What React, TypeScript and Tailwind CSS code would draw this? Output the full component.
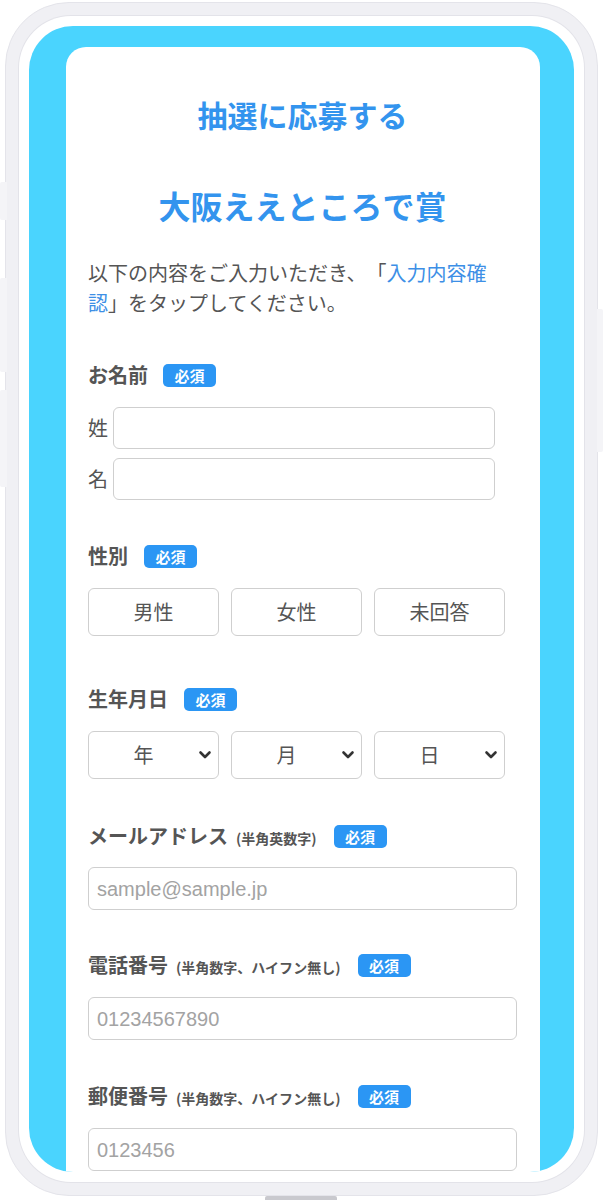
import React from 'react';

const jp = { fontFamily: '"Noto Sans CJK JP", "Noto Sans", sans-serif' };

const Badge: React.FC = () => (
  <span className="inline-flex h-[23px] w-[53px] items-center justify-center rounded-[5px] bg-[#2b96f4] text-[15px] font-bold leading-none text-white">
    必須
  </span>
);

interface LabelProps {
  text: string;
  note?: string;
  gap?: string;
}

const FieldLabel: React.FC<LabelProps> = ({ text, note, gap = 'gap-[15px]' }) => (
  <div className={`flex h-[24px] items-center ${gap}`}>
    <span className="text-[20px] font-bold leading-none text-[#555]">
      {text}
      {note && <span className="ml-[8px] text-[14px]">{note}</span>}
    </span>
    <Badge />
  </div>
);

const TextInput: React.FC<{ placeholder?: string; className?: string }> = ({ placeholder, className = '' }) => (
  <div
    className={`flex h-[43px] items-center rounded-[6px] border border-[#cfcfcf] bg-white pl-[8px] text-[20px] text-[#a3a3a3] ${className}`}
    style={{ fontFamily: '"Liberation Sans", Arial, sans-serif' }}
  >
    {placeholder}
  </div>
);

const Chevron: React.FC = () => (
  <svg width="14" height="10" viewBox="0 0 14 10" className="shrink-0">
    <path d="M2.5 2.5 L7 7 L11.5 2.5" fill="none" stroke="#333" strokeWidth="2.6" strokeLinecap="round" strokeLinejoin="round" />
  </svg>
);

const SelectBox: React.FC<{ label: string }> = ({ label }) => (
  <div className="flex h-[48px] w-[131px] items-center rounded-[6px] border border-[#cfcfcf] bg-white pr-[6px]">
    <span className="flex-1 text-center text-[20px] text-[#555]">{label}</span>
    <Chevron />
  </div>
);

const ChoiceButton: React.FC<{ label: string }> = ({ label }) => (
  <div className="flex h-[48px] w-[131px] items-center justify-center rounded-[6px] border border-[#cfcfcf] bg-white text-[20px] text-[#555]">
    {label}
  </div>
);

export default function App() {
  return (
    <div className="relative h-[1200px] w-[603px] overflow-hidden bg-white [text-spacing-trim:space-all]" style={jp}>
      {/* side keys */}
      <div className="absolute left-0 top-[182px] h-[38px] w-[7px] rounded-l-[2px] bg-[#f4f4f7]" />
      <div className="absolute left-0 top-[278px] h-[94px] w-[7px] rounded-l-[2px] bg-[#f4f4f7]" />
      <div className="absolute left-0 top-[390px] h-[97px] w-[7px] rounded-l-[2px] bg-[#f4f4f7]" />
      <div className="absolute right-0 top-[309px] h-[143px] w-[6px] rounded-r-[2px] bg-[#f4f4f7]" />

      {/* phone frame */}
      <div className="ml-[5px] mt-[2px] h-[1194px] w-[593px] rounded-[64px] border border-[#e4e4ea] bg-[#f0f0f4] p-[13px]">
        <div className="h-full w-full rounded-[52px] bg-white p-[10px] shadow-[0_0_0_1px_#e3e3e9]">
          <div className="h-full w-full overflow-hidden rounded-[44px] bg-[#4ad4fe] pl-[37px] pr-[34px] pt-[21px]">
            <div className="min-h-full rounded-t-[20px] bg-white pl-[22px] pr-[23px] pt-[46px]">
              <h1 className="text-center text-[30px] font-bold leading-[42px] text-[#3394ee]">抽選に応募する</h1>
              <h2 className="mt-[46px] text-center text-[32px] font-bold leading-[48px] text-[#3394ee]">
                大阪ええところで賞
              </h2>
              <p className="mt-[29px] text-[20px] leading-[30px] text-[#555]">
                以下の内容をご入力いただき、「<span className="text-[#3d8fe6]">入力内容確認</span>」をタップしてください。
              </p>

              {/* name */}
              <div className="mt-[45px]">
                <FieldLabel text="お名前" />
                <div className="mt-[20px] flex flex-col gap-[9px]">
                  <div className="flex items-center gap-[5px]">
                    <span className="w-[20px] text-[20px] leading-none text-[#555]">姓</span>
                    <div className="h-[42px] w-[382px] rounded-[6px] border border-[#cfcfcf] bg-white" />
                  </div>
                  <div className="flex items-center gap-[5px]">
                    <span className="w-[20px] text-[20px] leading-none text-[#555]">名</span>
                    <div className="h-[42px] w-[382px] rounded-[6px] border border-[#cfcfcf] bg-white" />
                  </div>
                </div>
              </div>

              {/* gender */}
              <div className="mt-[44px]">
                <FieldLabel text="性別" gap="gap-[16px]" />
                <div className="mt-[20px] flex gap-[12px]">
                  <ChoiceButton label="男性" />
                  <ChoiceButton label="女性" />
                  <ChoiceButton label="未回答" />
                </div>
              </div>

              {/* birthday */}
              <div className="mt-[51px]">
                <FieldLabel text="生年月日" gap="gap-[16px]" />
                <div className="mt-[20px] flex gap-[12px]">
                  <SelectBox label="年" />
                  <SelectBox label="月" />
                  <SelectBox label="日" />
                </div>
              </div>

              {/* email */}
              <div className="mt-[45px]">
                <FieldLabel text="メールアドレス" note="(半角英数字)" gap="gap-[17px]" />
                <TextInput className="mt-[19px]" placeholder="sample@sample.jp" />
              </div>

              {/* tel */}
              <div className="mt-[43px]">
                <FieldLabel text="電話番号" note="(半角数字、ハイフン無し)" gap="gap-[17px]" />
                <TextInput className="mt-[20px]" placeholder="01234567890" />
              </div>

              {/* postal code */}
              <div className="mt-[44px]">
                <FieldLabel text="郵便番号" note="(半角数字、ハイフン無し)" gap="gap-[17px]" />
                <TextInput className="mt-[20px]" placeholder="0123456" />
              </div>
            </div>
          </div>
        </div>
      </div>

      {/* home bar */}
      <div className="absolute bottom-0 left-[265px] h-[4px] w-[72px] rounded-t-[2px] bg-[#c9c9ce]" />
    </div>
  );
}
